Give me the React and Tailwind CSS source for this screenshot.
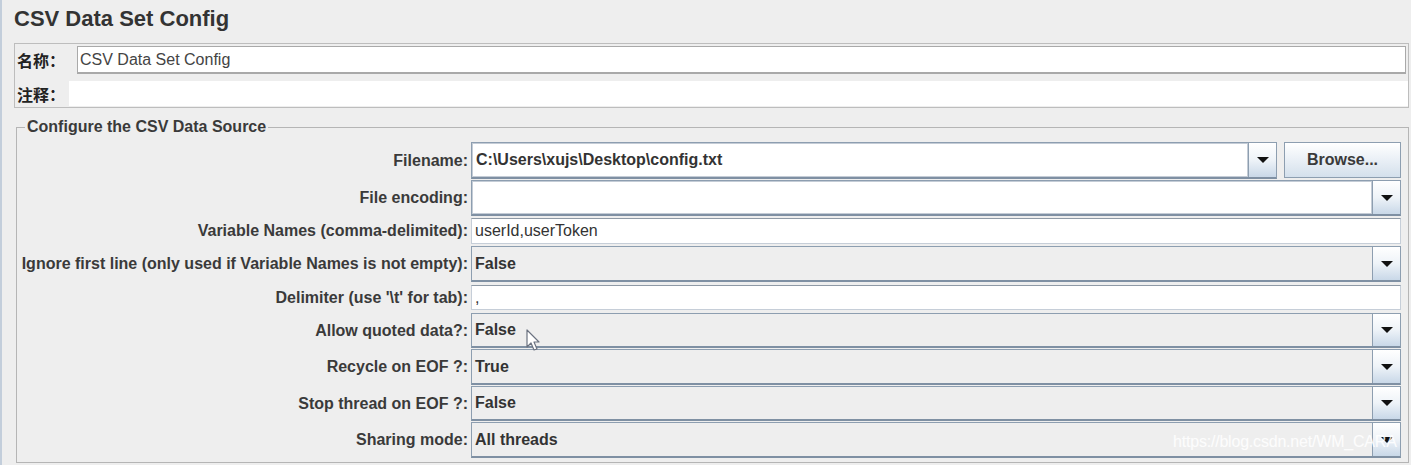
import React from "react";

const FONT = "font-['Liberation_Sans','Noto_Sans_CJK_SC',Arial,sans-serif]";

function Arrow() {
  return (
    <div className="w-[28px] h-full border-l border-[#8d9eb0] bg-gradient-to-b from-[#ffffff] via-[#eef3f8] to-[#c9d8e8] flex items-center justify-center shrink-0">
      <svg width="12" height="6" viewBox="0 0 12 6">
        <polygon points="0,0 12,0 6,6" fill="#111" />
      </svg>
    </div>
  );
}

function Combo({ value, editable, className = "" }) {
  return (
    <div
      className={`flex items-stretch h-full border border-[#8d9eb0] border-b-2 border-b-[#7f90a3] ${className}`}
    >
      <div
        className={`flex-1 flex items-center pl-[3px] font-bold text-[#333] ${
          editable ? "bg-white border border-[#c4ccd6]" : "bg-[#eeeeee]"
        }`}
      >
        {value}
      </div>
      <Arrow />
    </div>
  );
}

function TextField({ value }) {
  return (
    <div className="h-full w-full bg-white border border-[#c6ced8] border-t-[#8f9aa6] flex items-center pl-[3px] font-normal text-[#333]">
      {value}
    </div>
  );
}

const rows = [
  { label: "Filename:", type: "file", value: "C:\\Users\\xujs\\Desktop\\config.txt", h: 37, mt: 0 },
  { label: "File encoding:", type: "combo-edit", value: "", h: 36, mt: 1 },
  { label: "Variable Names (comma-delimited):", type: "text", value: "userId,userToken", h: 26, mt: 2 },
  { label: "Ignore first line (only used if Variable Names is not empty):", type: "combo", value: "False", h: 36, mt: 2 },
  { label: "Delimiter (use '\\t' for tab):", type: "text", value: ",", h: 25, mt: 3 },
  { label: "Allow quoted data?:", type: "combo", value: "False", h: 35, mt: 3 },
  { label: "Recycle on EOF ?:", type: "combo", value: "True", h: 36, mt: 1 },
  { label: "Stop thread on EOF ?:", type: "combo", value: "False", h: 35, mt: 1 },
  { label: "Sharing mode:", type: "combo", value: "All threads", h: 36, mt: 1 },
];

export default function App() {
  return (
    <div
      className={`relative w-[1411px] h-[465px] overflow-hidden bg-[#eeeeee] border-l-2 border-[#c3cedb] ${FONT} text-[#333]`}
    >
      <div className="h-[43px] pl-[12px] pt-[6px] text-[22px] leading-[26px] font-bold text-[#333]">
        CSV Data Set Config
      </div>

      <div className="ml-[12px] w-[1395px] h-[65px] border border-[#bdbdbd] flex flex-col">
        <div className="flex items-center mt-[2px] h-[28px]">
          <div className="w-[62px] pl-[2px] text-[16px] font-bold text-[#222] font-['Noto_Sans_CJK_SC',sans-serif]">
            名称：
          </div>
          <div className="flex-1 mr-[2px] h-[28px] bg-white border border-[#a9a9a9] border-b-2 flex items-center pl-[2px] text-[16px] text-[#444]">
            CSV Data Set Config
          </div>
        </div>
        <div className="flex items-center mt-[7px] h-[25px]">
          <div className="w-[54px] pl-[2px] text-[16px] font-bold text-[#222] font-['Noto_Sans_CJK_SC',sans-serif]">
            注释：
          </div>
          <div className="flex-1 h-[25px] bg-white" />
        </div>
      </div>

      <fieldset className="ml-[14px] mt-[10px] w-[1393px] h-[345px] border border-[#b5b5b5] pr-[7px] pt-[6px]">
        <legend className="ml-[8px] px-[2px] text-[16px] leading-[18px] font-bold text-[#3a3a3a]">
          Configure the CSV Data Source
        </legend>
        <div className="flex flex-col text-[16px]">
          {rows.map((r) => (
            <div
              key={r.label}
              className="flex items-center"
              style={{ height: r.h, marginTop: r.mt }}
            >
              <div className="w-[454px] pr-[3px] text-right font-bold text-[#3a3a3a] whitespace-nowrap">
                {r.label}
              </div>
              <div className="flex-1 h-full flex">
                {r.type === "file" && (
                  <>
                    <Combo value={r.value} editable className="w-[806px]" />
                    <button className="ml-[7px] flex-1 h-[36px] border border-[#8d9eb0] bg-gradient-to-b from-[#ffffff] to-[#d4e0ec] font-bold text-[#3a3a3a] text-[16px]">
                      Browse...
                    </button>
                  </>
                )}
                {r.type === "combo-edit" && <Combo value={r.value} editable className="w-full" />}
                {r.type === "combo" && <Combo value={r.value} className="w-full" />}
                {r.type === "text" && <TextField value={r.value} />}
              </div>
            </div>
          ))}
        </div>
      </fieldset>

      <svg
        className="absolute left-[524px] top-[329px]"
        width="16"
        height="24"
        viewBox="0 0 16 24"
      >
        <path
          d="M1 1 L1 18 L5 14 L8 21 L11 20 L8 13 L13 13 Z"
          fill="#fff"
          stroke="#6b7280"
          strokeWidth="1.2"
          strokeLinejoin="round"
        />
      </svg>

      <div className="absolute left-[1171px] top-[430px] text-[16px] text-white/85 font-['Liberation_Sans',sans-serif] tracking-[-0.2px]">
        https://blog.csdn.net/WM_CARA
      </div>
    </div>
  );
}
